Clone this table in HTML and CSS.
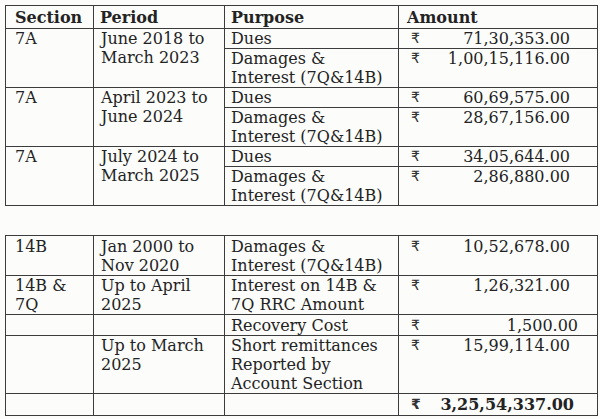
FILE: index.html
```html
<!DOCTYPE html>
<html lang="en">
<head>
<meta charset="utf-8">
<title>Dues statement</title>
<link rel="stylesheet" href="styles.css">
</head>
<body>
<main class="page">
  <table class="ledger">
    <colgroup>
      <col class="c-sec"><col class="c-per"><col class="c-pur"><col class="c-amt">
    </colgroup>
    <thead>
      <tr class="head">
        <th>Section</th><th>Period</th><th>Purpose</th><th>Amount</th>
      </tr>
    </thead>
    <tbody>
      <tr>
        <td class="sec" rowspan="2">7A</td>
        <td class="per" rowspan="2">June 2018 to<br>March 2023</td>
        <td class="pur">Dues</td>
        <td class="amt"><span class="rs">₹</span><span class="num">71,30,353.00</span></td>
      </tr>
      <tr class="tall">
        <td class="pur">Damages &amp;<br>Interest (7Q&amp;14B)</td>
        <td class="amt"><span class="rs">₹</span><span class="num">1,00,15,116.00</span></td>
      </tr>
      <tr>
        <td class="sec" rowspan="2">7A</td>
        <td class="per" rowspan="2">April 2023 to<br>June 2024</td>
        <td class="pur">Dues</td>
        <td class="amt"><span class="rs">₹</span><span class="num">60,69,575.00</span></td>
      </tr>
      <tr>
        <td class="pur">Damages &amp;<br>Interest (7Q&amp;14B)</td>
        <td class="amt"><span class="rs">₹</span><span class="num">28,67,156.00</span></td>
      </tr>
      <tr>
        <td class="sec" rowspan="2">7A</td>
        <td class="per" rowspan="2">July 2024 to<br>March 2025</td>
        <td class="pur">Dues</td>
        <td class="amt"><span class="rs">₹</span><span class="num">34,05,644.00</span></td>
      </tr>
      <tr>
        <td class="pur">Damages &amp;<br>Interest (7Q&amp;14B)</td>
        <td class="amt"><span class="rs">₹</span><span class="num">2,86,880.00</span></td>
      </tr>
    </tbody>
  </table>

  <table class="ledger second">
    <colgroup>
      <col class="c-sec"><col class="c-per"><col class="c-pur"><col class="c-amt">
    </colgroup>
    <tbody>
      <tr class="r40">
        <td class="sec">14B</td>
        <td class="per">Jan 2000 to<br>Nov 2020</td>
        <td class="pur">Damages &amp;<br>Interest (7Q&amp;14B)</td>
        <td class="amt"><span class="rs">₹</span><span class="num">10,52,678.00</span></td>
      </tr>
      <tr>
        <td class="sec">14B &amp;<br>7Q</td>
        <td class="per">Up to April<br>2025</td>
        <td class="pur">Interest on 14B &amp;<br>7Q RRC Amount</td>
        <td class="amt"><span class="rs">₹</span><span class="num">1,26,321.00</span></td>
      </tr>
      <tr class="r21">
        <td class="sec"></td>
        <td class="per"></td>
        <td class="pur">Recovery Cost</td>
        <td class="amt shift"><span class="rs">₹</span><span class="num">1,500.00</span></td>
      </tr>
      <tr>
        <td class="sec"></td>
        <td class="per">Up to March<br>2025</td>
        <td class="pur">Short remittances<br>Reported by<br>Account Section</td>
        <td class="amt"><span class="rs">₹</span><span class="num">15,99,114.00</span></td>
      </tr>
      <tr class="total">
        <td class="sec"></td>
        <td class="per"></td>
        <td class="pur"></td>
        <td class="amt"><span class="rs">₹</span><span class="num">3,25,54,337.00</span></td>
      </tr>
    </tbody>
  </table>
</main>
</body>
</html>
```

FILE: styles.css
```css
html, body {
  margin: 0;
  padding: 0;
  background: #fcfcfb;
}

.page {
  padding: 5px 3px 0 5px;
  display: flex;
  flex-direction: column;
  gap: 29px;
  font-family: "DejaVu Serif", "Liberation Serif", serif;
  font-size: 16px;
  line-height: 19px;
  color: #232323;
}

.ledger {
  border-collapse: collapse;
  table-layout: fixed;
  width: 592px;
}

.c-sec { width: 88px; }
.c-per { width: 131px; }
.c-pur { width: 174px; }
.c-amt { width: 199px; }

.ledger th,
.ledger td {
  border: 1px solid #3c3c3c;
  padding: 0 0 0 6px;
  vertical-align: top;
  text-align: left;
  font-weight: normal;
  white-space: nowrap;
}

.ledger .head th {
  font-weight: bold;
  padding-top: 2px;
  padding-bottom: 1px;
}

.ledger .head th:first-child { padding-left: 9px; }
.ledger .head th:nth-child(2) { padding-left: 6px; }
.ledger .head th:last-child { padding-left: 8px; }

.ledger td.sec { padding-left: 9px; }
.ledger td.per { padding-left: 7px; }
.ledger td.pur { padding-left: 6px; }

.ledger td.amt {
  padding-left: 12px;
  padding-right: 27px;
}

.amt .rs {
  float: left;
  font-family: "DejaVu Sans", "Noto Sans", sans-serif;
  font-size: 14px;
  color: #333;
}

.amt .num {
  float: right;
}

.ledger td.amt.shift { padding-right: 19px; }

.r40 td { padding-top: 1px; }
.r21 td { padding-top: 1px; }

.total td {
  padding-top: 1px;
  padding-bottom: 1px;
}

.total .num {
  font-weight: bold;
  padding-right: -4px;
  margin-right: -4px;
}

.total .rs {
  font-weight: bold;
}
```
